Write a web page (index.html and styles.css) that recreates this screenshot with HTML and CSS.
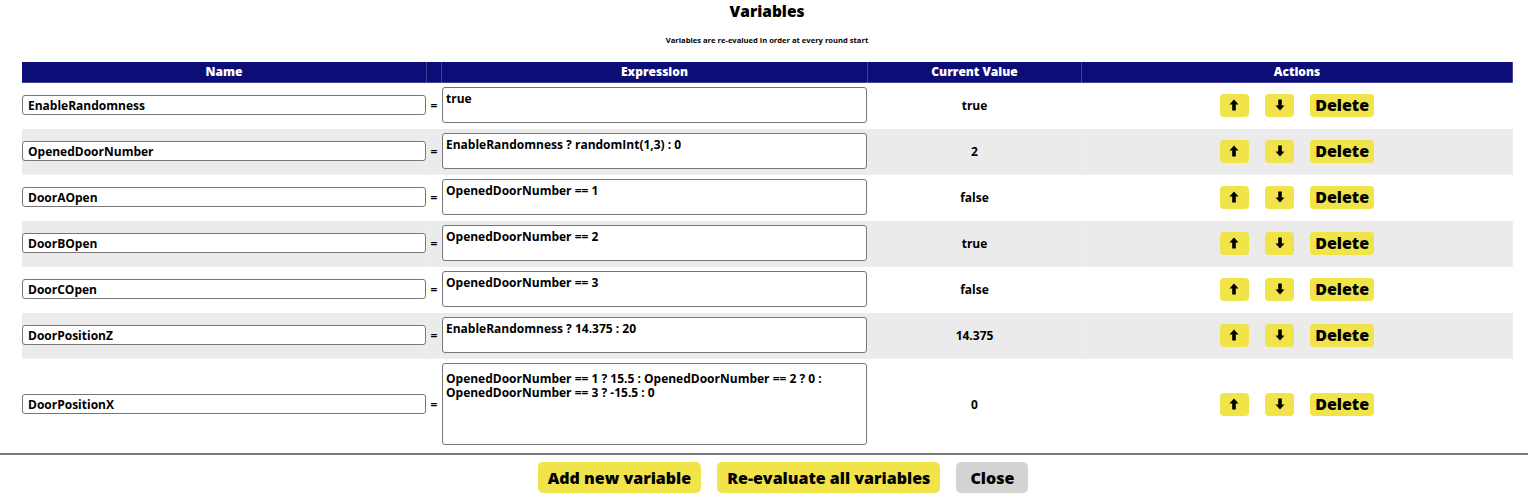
FILE: index.html
```html
<!DOCTYPE html>
<html lang="en">
<head>
    <meta charset="UTF-8">
    <meta name="viewport" content="width=device-width, initial-scale=1.0">
    <title>Variables</title>
    <link rel="stylesheet" href="styles.css">
</head>
<body>
    <div class="dialog">
        <h1 class="title">Variables</h1>
        <p class="subtitle">Variables are re-evalued in order at every round start</p>

        <div class="table-wrap">
            <table class="vars">
                <colgroup>
                    <col class="col-name">
                    <col class="col-eq">
                    <col class="col-expr">
                    <col class="col-value">
                    <col class="col-actions">
                </colgroup>
                <thead>
                    <tr>
                        <th>Name</th>
                        <th></th>
                        <th>Expression</th>
                        <th>Current Value</th>
                        <th>Actions</th>
                    </tr>
                </thead>
                <tbody>
                    <tr>
                        <td><input class="name-input" type="text" value="EnableRandomness"></td>
                        <td class="eq">=</td>
                        <td><textarea class="expr">true</textarea></td>
                        <td class="value">true</td>
                        <td class="actions">
                            <button class="btn icon-btn"><svg viewBox="0 0 10 12"><path d="M5 0.5 L9.5 5.5 H6.8 V11.5 H3.2 V5.5 H0.5 Z"/></svg></button>
                            <button class="btn icon-btn"><svg viewBox="0 0 10 12"><path d="M5 11.5 L9.5 6.5 H6.8 V0.5 H3.2 V6.5 H0.5 Z"/></svg></button>
                            <button class="btn delete-btn">Delete</button>
                        </td>
                    </tr>
                    <tr>
                        <td><input class="name-input" type="text" value="OpenedDoorNumber"></td>
                        <td class="eq">=</td>
                        <td><textarea class="expr">EnableRandomness ? randomInt(1,3) : 0</textarea></td>
                        <td class="value">2</td>
                        <td class="actions">
                            <button class="btn icon-btn"><svg viewBox="0 0 10 12"><path d="M5 0.5 L9.5 5.5 H6.8 V11.5 H3.2 V5.5 H0.5 Z"/></svg></button>
                            <button class="btn icon-btn"><svg viewBox="0 0 10 12"><path d="M5 11.5 L9.5 6.5 H6.8 V0.5 H3.2 V6.5 H0.5 Z"/></svg></button>
                            <button class="btn delete-btn">Delete</button>
                        </td>
                    </tr>
                    <tr>
                        <td><input class="name-input" type="text" value="DoorAOpen"></td>
                        <td class="eq">=</td>
                        <td><textarea class="expr">OpenedDoorNumber == 1</textarea></td>
                        <td class="value">false</td>
                        <td class="actions">
                            <button class="btn icon-btn"><svg viewBox="0 0 10 12"><path d="M5 0.5 L9.5 5.5 H6.8 V11.5 H3.2 V5.5 H0.5 Z"/></svg></button>
                            <button class="btn icon-btn"><svg viewBox="0 0 10 12"><path d="M5 11.5 L9.5 6.5 H6.8 V0.5 H3.2 V6.5 H0.5 Z"/></svg></button>
                            <button class="btn delete-btn">Delete</button>
                        </td>
                    </tr>
                    <tr>
                        <td><input class="name-input" type="text" value="DoorBOpen"></td>
                        <td class="eq">=</td>
                        <td><textarea class="expr">OpenedDoorNumber == 2</textarea></td>
                        <td class="value">true</td>
                        <td class="actions">
                            <button class="btn icon-btn"><svg viewBox="0 0 10 12"><path d="M5 0.5 L9.5 5.5 H6.8 V11.5 H3.2 V5.5 H0.5 Z"/></svg></button>
                            <button class="btn icon-btn"><svg viewBox="0 0 10 12"><path d="M5 11.5 L9.5 6.5 H6.8 V0.5 H3.2 V6.5 H0.5 Z"/></svg></button>
                            <button class="btn delete-btn">Delete</button>
                        </td>
                    </tr>
                    <tr>
                        <td><input class="name-input" type="text" value="DoorCOpen"></td>
                        <td class="eq">=</td>
                        <td><textarea class="expr">OpenedDoorNumber == 3</textarea></td>
                        <td class="value">false</td>
                        <td class="actions">
                            <button class="btn icon-btn"><svg viewBox="0 0 10 12"><path d="M5 0.5 L9.5 5.5 H6.8 V11.5 H3.2 V5.5 H0.5 Z"/></svg></button>
                            <button class="btn icon-btn"><svg viewBox="0 0 10 12"><path d="M5 11.5 L9.5 6.5 H6.8 V0.5 H3.2 V6.5 H0.5 Z"/></svg></button>
                            <button class="btn delete-btn">Delete</button>
                        </td>
                    </tr>
                    <tr>
                        <td><input class="name-input" type="text" value="DoorPositionZ"></td>
                        <td class="eq">=</td>
                        <td><textarea class="expr">EnableRandomness ? 14.375 : 20</textarea></td>
                        <td class="value">14.375</td>
                        <td class="actions">
                            <button class="btn icon-btn"><svg viewBox="0 0 10 12"><path d="M5 0.5 L9.5 5.5 H6.8 V11.5 H3.2 V5.5 H0.5 Z"/></svg></button>
                            <button class="btn icon-btn"><svg viewBox="0 0 10 12"><path d="M5 11.5 L9.5 6.5 H6.8 V0.5 H3.2 V6.5 H0.5 Z"/></svg></button>
                            <button class="btn delete-btn">Delete</button>
                        </td>
                    </tr>
                    <tr>
                        <td><input class="name-input" type="text" value="DoorPositionX"></td>
                        <td class="eq">=</td>
                        <td><textarea class="expr tall">OpenedDoorNumber == 1 ? 15.5 : OpenedDoorNumber == 2 ? 0 : OpenedDoorNumber == 3 ? -15.5 : 0</textarea></td>
                        <td class="value">0</td>
                        <td class="actions">
                            <button class="btn icon-btn"><svg viewBox="0 0 10 12"><path d="M5 0.5 L9.5 5.5 H6.8 V11.5 H3.2 V5.5 H0.5 Z"/></svg></button>
                            <button class="btn icon-btn"><svg viewBox="0 0 10 12"><path d="M5 11.5 L9.5 6.5 H6.8 V0.5 H3.2 V6.5 H0.5 Z"/></svg></button>
                            <button class="btn delete-btn">Delete</button>
                        </td>
                    </tr>
                </tbody>
            </table>
        </div>

        <div class="footer">
            <button class="btn big-btn">Add new variable</button>
            <button class="btn big-btn">Re-evaluate all variables</button>
            <button class="btn big-btn grey">Close</button>
        </div>
    </div>
</body>
</html>
```

FILE: styles.css
```css
body {
    margin: 0;
    font-family: "Open Sans", "DejaVu Sans", sans-serif;
    font-weight: 700;
    color: #000;
    background: #fff;
}

.title {
    margin: 0;
    padding: 0 0 0 6px;
    font-size: 15.5px;
    line-height: 22px;
    text-align: center;
    font-weight: 800;
}

.subtitle {
    margin: 13px 0 0 6px;
    font-size: 7.6px;
    line-height: 11px;
    text-align: center;
}

.table-wrap {
    padding: 15px 15px 2px 21px;
}

.vars {
    width: 100%;
    table-layout: fixed;
    border-collapse: collapse;
}

.col-name { width: 405px; }
.col-eq { width: 15px; }
.col-expr { width: 426px; }
.col-value { width: 214px; }

.vars th,
.vars td {
    border: 1px solid rgba(255, 255, 255, 0.22);
    padding: 4px 0 5px;
    text-align: center;
    font-size: 12px;
}

.vars th {
    background-color: #0d0d78;
    color: #fff;
    padding: 2px 0 2px;
    line-height: 16px;
    font-weight: 800;
}

.vars tbody tr:nth-child(even) td {
    background-color: #ebebeb;
}

.name-input {
    display: block;
    width: 100%;
    box-sizing: border-box;
    height: 20px;
    padding: 0 5px;
    border: 1px solid #767676;
    border-radius: 3px;
    font-family: inherit;
    font-weight: 700;
    font-size: 12px;
    color: #000;
}

.eq {
    font-size: 10px;
}

.expr {
    display: block;
    width: 100%;
    box-sizing: border-box;
    height: 36px;
    margin: 0;
    padding: 4px 3px 1px;
    border: 1px solid #767676;
    border-radius: 3px;
    resize: none;
    font-family: inherit;
    font-weight: 700;
    font-size: 12px;
    line-height: 14px;
    color: #000;
    overflow: hidden;
}

.expr.tall {
    height: 82px;
    padding-top: 8px;
}

.value {
    font-weight: 700;
}

.actions {
    white-space: nowrap;
}

.btn {
    border: none;
    background-color: #f0e44a;
    color: #000;
    font-family: inherit;
    font-weight: 800;
    cursor: pointer;
    vertical-align: middle;
}

.icon-btn {
    width: 29px;
    height: 23px;
    padding: 0;
    margin: 0 13px 0 0;
    border-radius: 4px;
}

.icon-btn svg {
    display: block;
    width: 10px;
    height: 12px;
    margin: 0 auto;
    fill: #000;
}

.delete-btn {
    height: 23px;
    width: 64px;
    padding: 0;
    border-radius: 4px;
    font-size: 16px;
}

.footer {
    border-top: 2px solid #7a7a7a;
    padding: 7px 0 0 38px;
    display: flex;
    justify-content: center;
    gap: 16px;
}

.big-btn {
    height: 31px;
    padding: 0 10px;
    border-radius: 5px;
    font-size: 16px;
}

.big-btn.grey {
    padding: 0 14px;
    background-color: #d3d3d3;
}
```
